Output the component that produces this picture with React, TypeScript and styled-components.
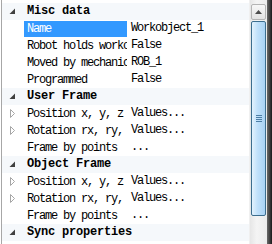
import React from "react";
import styled, { createGlobalStyle } from "styled-components";

const Global = createGlobalStyle`
  html, body { margin: 0; padding: 0; background: #ffffff; }
  body { font-family: "Liberation Mono", "DejaVu Sans Mono", monospace; }
`;

const Frame = styled.div`
  display: flex;
  width: 272px;
  height: 244px;
  overflow: hidden;
  background: #ffffff;
  box-sizing: border-box;
  padding-left: 1px;
`;

const Grid = styled.div`
  flex: 1;
  display: flex;
  flex-direction: column;
  padding-top: 3px;
  border-left: 1px solid #a7a7a7;
  overflow: hidden;
`;

const Row = styled.div<{ $header?: boolean }>`
  display: grid;
  grid-template-columns: 22px 103px 1fr;
  height: 17px;
  flex: none;
  align-items: center;
  background: ${(p) => (p.$header ? "#f5f8fb" : "#ffffff")};
  font-size: 12px;
  letter-spacing: ${(p) => (p.$header ? "-0.2px" : "-1.2px")};
  line-height: 17px;
  color: #000000;
  font-weight: ${(p) => (p.$header ? 700 : 400)};
`;

const Gutter = styled.div`
  display: flex;
  align-items: center;
  justify-content: center;
  height: 17px;
  padding-right: 2px;
`;

const Label = styled.div<{ $selected?: boolean }>`
  height: 16px;
  line-height: 16px;
  padding-left: 3px;
  white-space: nowrap;
  overflow: hidden;
  background: ${(p) => (p.$selected ? "#3399ff" : "transparent")};
  color: ${(p) => (p.$selected ? "#ffffff" : "#000000")};
`;

const HeaderLabel = styled.div`
  grid-column: 2 / 4;
  padding-left: 3px;
  white-space: nowrap;
`;

const Value = styled.div`
  padding-left: 4px;
  white-space: nowrap;
  overflow: hidden;
`;

const Scrollbar = styled.div`
  width: 17px;
  display: flex;
  flex-direction: column;
  padding-top: 4px;
  background: linear-gradient(to right, #e6e6e6, #f4f4f4 40%, #ebebeb);
  border-left: 1px solid #f0f0f0;
`;

const ArrowButton = styled.div`
  height: 14px;
  margin: 0 1px;
  border: 1px solid #b4b4b4;
  border-radius: 2px;
  background: linear-gradient(to bottom, #f7f7f7, #e3e3e3);
  display: flex;
  align-items: center;
  justify-content: center;
`;

const Thumb = styled.div`
  height: 193px;
  margin: 1px 1px 0;
  border: 1px solid #3c6e8f;
  border-radius: 2px;
  background: linear-gradient(to right, #e3f2fd, #bfe0fa 45%, #a8d2f5);
  display: flex;
  align-items: center;
  justify-content: center;
`;

const Grip = styled.div`
  width: 6px;
  height: 7px;
  background: repeating-linear-gradient(to bottom, #4d7fa6 0 1px, transparent 1px 2px);
`;

const EdgeStrip = styled.div`
  width: 5px;
  background: linear-gradient(to right, #6a6a6a, #1a1a1a);
`;

const Expanded = () => (
  <svg width="7" height="7" viewBox="0 0 7 7">
    <polygon points="6,0.5 6,6 0.5,6" fill="#404040" />
  </svg>
);

const Collapsed = () => (
  <svg width="7" height="9" viewBox="0 0 7 9">
    <polygon points="1.5,0.5 5.5,4.5 1.5,8.5" fill="#ffffff" stroke="#a6a6a6" strokeWidth="1" />
  </svg>
);

type Item =
  | { kind: "header"; text: string }
  | { kind: "prop"; label: string; value: string; expandable?: boolean; selected?: boolean };

const items: Item[] = [
  { kind: "header", text: "Misc data" },
  { kind: "prop", label: "Name", value: "Workobject_1", selected: true },
  { kind: "prop", label: "Robot holds workobject", value: "False" },
  { kind: "prop", label: "Moved by mechanical unit", value: "ROB_1" },
  { kind: "prop", label: "Programmed", value: "False" },
  { kind: "header", text: "User Frame" },
  { kind: "prop", label: "Position x, y, z", value: "Values...", expandable: true },
  { kind: "prop", label: "Rotation rx, ry, rz", value: "Values...", expandable: true },
  { kind: "prop", label: "Frame by points", value: "..." },
  { kind: "header", text: "Object Frame" },
  { kind: "prop", label: "Position x, y, z", value: "Values...", expandable: true },
  { kind: "prop", label: "Rotation rx, ry, rz", value: "Values...", expandable: true },
  { kind: "prop", label: "Frame by points", value: "..." },
  { kind: "header", text: "Sync properties" },
];

export default function App() {
  return (
    <>
      <Global />
      <Frame>
        <Grid>
          {items.map((it, i) =>
            it.kind === "header" ? (
              <Row key={i} $header>
                <Gutter>
                  <Expanded />
                </Gutter>
                <HeaderLabel>{it.text}</HeaderLabel>
              </Row>
            ) : (
              <Row key={i}>
                <Gutter>{it.expandable ? <Collapsed /> : null}</Gutter>
                <Label $selected={it.selected}>{it.label}</Label>
                <Value>{it.value}</Value>
              </Row>
            )
          )}
        </Grid>
        <Scrollbar>
          <ArrowButton>
            <svg width="7" height="4" viewBox="0 0 7 4">
              <polygon points="0,4 3.5,0 7,4" fill="#4d4d4d" />
            </svg>
          </ArrowButton>
          <Thumb>
            <Grip />
          </Thumb>
        </Scrollbar>
        <EdgeStrip />
      </Frame>
    </>
  );
}
